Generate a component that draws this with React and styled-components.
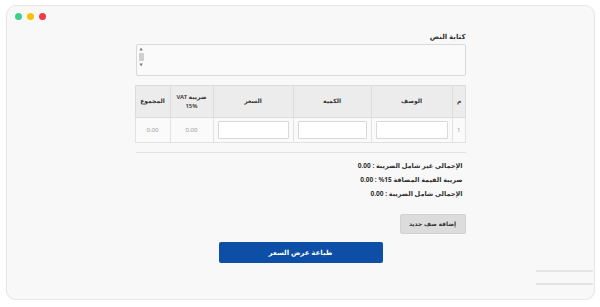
import React from 'react';
import styled, { createGlobalStyle } from 'styled-components';

const GlobalStyle = createGlobalStyle`
  html, body {
    margin: 0;
    padding: 0;
    background: #ffffff;
  }
  body {
    font-family: "Noto Sans", "DejaVu Sans", sans-serif;
  }
`;

const Window = styled.div`
  position: relative;
  box-sizing: border-box;
  width: 589px;
  height: 295px;
  margin: 5px 0 0 6px;
  background: #f8f8f8;
  border: 1px solid #e6e6e6;
  border-radius: 10px;
  box-shadow: 0 1px 2px rgba(0, 0, 0, 0.04);
`;

const Dots = styled.div`
  display: flex;
  gap: 5px;
  padding: 7px 0 0 8px;
`;

const Dot = styled.span`
  width: 7px;
  height: 7px;
  border-radius: 50%;
  background: ${p => p.color};
`;

const Content = styled.div`
  direction: rtl;
  width: 330px;
  margin: 12px auto 0;
  display: flex;
  flex-direction: column;
  font-size: 7px;
  color: #333;
`;

const Label = styled.label`
  font-size: 7px;
  font-weight: 600;
  color: #333;
  margin-bottom: 3px;
`;

const TextArea = styled.div`
  direction: ltr;
  box-sizing: border-box;
  height: 32px;
  background: #fafafa;
  border: 1px solid #d9d9d9;
  border-radius: 2px;
  display: flex;
`;

const Scroll = styled.div`
  width: 7px;
  margin: 1px;
  display: flex;
  flex-direction: column;
  align-items: center;
  gap: 2px;
  color: #777;
  font-size: 4px;
  line-height: 4px;
  padding-top: 1px;
`;

const Thumb = styled.div`
  width: 5px;
  height: 8px;
  background: #cfcfcf;
  border-radius: 1px;
`;

const Table = styled.table`
  margin-top: 9px;
  border-collapse: collapse;
  width: 330px;
  table-layout: fixed;
`;

const Th = styled.th`
  background: #ececec;
  border: 1px solid #dcdcdc;
  height: 31px;
  padding: 0 3px;
  font-size: 6px;
  font-weight: 600;
  color: #333;
  line-height: 9px;
  text-align: ${p => (p.$start ? 'right' : 'center')};
`;

const Td = styled.td`
  background: #fafafa;
  border: 1px solid #e2e2e2;
  height: 24px;
  padding: 0 4px;
  font-size: 6px;
  color: #999;
  text-align: ${p => (p.$start ? 'right' : 'center')};
`;

const CellInput = styled.div`
  box-sizing: border-box;
  height: 18px;
  background: #fff;
  border: 1px solid #d9d9d9;
  border-radius: 1px;
`;

const Rule = styled.hr`
  margin: 9px 0 0;
  border: none;
  border-top: 1px solid #e2e2e2;
`;

const Totals = styled.div`
  display: flex;
  flex-direction: column;
  gap: 6px;
  margin-top: 9px;
  padding-right: 3px;
`;

const TotalLine = styled.div`
  font-size: 6.5px;
  font-weight: 700;
  color: #333;
  line-height: 8px;
`;

const AddRow = styled.button`
  align-self: flex-start;
  margin-top: 16px;
  width: 66px;
  height: 20px;
  background: #dcdcdc;
  border: 1px solid #d2d2d2;
  border-radius: 2px;
  font-family: inherit;
  font-size: 6px;
  font-weight: 600;
  color: #333;
  padding: 0;
`;

const PrintButton = styled.button`
  align-self: center;
  margin-top: 8px;
  width: 164px;
  height: 21px;
  background: #0d4ea6;
  border: none;
  border-radius: 2px;
  font-family: inherit;
  font-size: 7px;
  font-weight: 700;
  color: #fff;
  padding: 0;
`;

const Handle = styled.div`
  position: absolute;
  right: 1px;
  bottom: 14px;
  width: 57px;
  display: flex;
  flex-direction: column;
  gap: 11px;
`;

const HandleLine = styled.span`
  height: 2px;
  background: #e4e4e4;
`;

const columns = [
  { title: 'م', width: 13, start: true },
  { title: 'الوصف', width: 81 },
  { title: 'الكمية', width: 78 },
  { title: 'السعر', width: 80 },
  { title: <>ضريبة VAT<br />15%</>, width: 43 },
  { title: 'المجموع', width: 35 },
];

export default function App() {
  return (
    <>
      <GlobalStyle />
      <Window>
        <Dots>
          <Dot color="#3ecf8e" />
          <Dot color="#f5c400" />
          <Dot color="#ef3a47" />
        </Dots>
        <Content>
          <Label>كتابة النص</Label>
          <TextArea>
            <Scroll>
              <span>▲</span>
              <Thumb />
              <span>▼</span>
            </Scroll>
          </TextArea>
          <Table>
            <colgroup>
              {columns.map((c, i) => (
                <col key={i} style={{ width: c.width }} />
              ))}
            </colgroup>
            <thead>
              <tr>
                {columns.map((c, i) => (
                  <Th key={i} $start={c.start}>{c.title}</Th>
                ))}
              </tr>
            </thead>
            <tbody>
              <tr>
                <Td $start>1</Td>
                <Td><CellInput /></Td>
                <Td><CellInput /></Td>
                <Td><CellInput /></Td>
                <Td>0.00</Td>
                <Td>0.00</Td>
              </tr>
            </tbody>
          </Table>
          <Rule />
          <Totals>
            <TotalLine>الإجمالي غير شامل الضريبة : 0.00</TotalLine>
            <TotalLine>ضريبة القيمة المضافة 15% : 0.00</TotalLine>
            <TotalLine>الإجمالي شامل الضريبة : 0.00</TotalLine>
          </Totals>
          <AddRow>إضافة صف جديد</AddRow>
          <PrintButton>طباعة عرض السعر</PrintButton>
        </Content>
        <Handle>
          <HandleLine />
          <HandleLine />
        </Handle>
      </Window>
    </>
  );
}
